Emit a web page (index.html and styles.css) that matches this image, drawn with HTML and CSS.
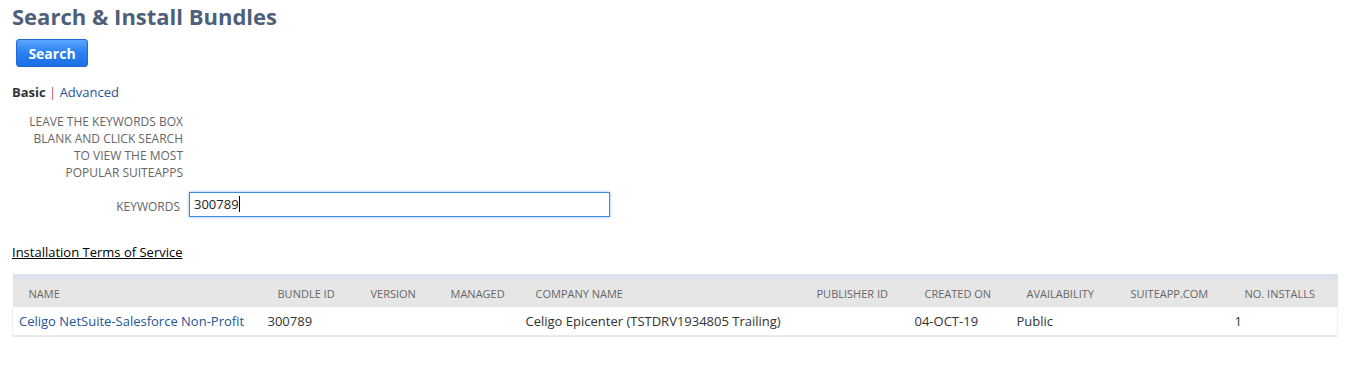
FILE: index.html
```html
<!DOCTYPE html>
<html lang="en">
<head>
  <meta charset="UTF-8" />
  <title>Search &amp; Install Bundles</title>
  <link rel="stylesheet" href="styles.css">
</head>
<body>
  <div class="page">
    <h1 class="page-title">Search &amp; Install Bundles</h1>

    <div class="actions">
      <button class="btn-primary">Search</button>
    </div>

    <div class="mode-tabs">
      <span class="tab-active">Basic</span>
      <span class="tab-sep">|</span>
      <a class="tab-link" href="#">Advanced</a>
    </div>

    <div class="form-row">
      <div class="field-label help-text">
        LEAVE THE KEYWORDS BOX<br/>
        BLANK AND CLICK SEARCH<br/>
        TO VIEW THE MOST<br/>
        POPULAR SUITEAPPS
      </div>
    </div>

    <div class="form-row keywords-row">
      <label class="field-label kw-label">KEYWORDS</label>
      <div class="text-input">300789<span class="caret"></span></div>
    </div>

    <a class="terms-link" href="#">Installation Terms of Service</a>

    <table class="results">
      <colgroup>
        <col style="width: 249px">
        <col style="width: 93px">
        <col style="width: 80px">
        <col style="width: 85px">
        <col style="width: 281px">
        <col style="width: 108px">
        <col style="width: 102px">
        <col style="width: 104px">
        <col style="width: 114px">
        <col style="width: 109px">
      </colgroup>
      <thead>
        <tr>
          <th>Name</th>
          <th>Bundle ID</th>
          <th>Version</th>
          <th>Managed</th>
          <th>Company Name</th>
          <th>Publisher ID</th>
          <th>Created On</th>
          <th>Availability</th>
          <th>SuiteApp.com</th>
          <th>No. Installs</th>
        </tr>
      </thead>
      <tbody>
        <tr>
          <td><a class="row-link" href="#">Celigo NetSuite-Salesforce Non-Profit</a></td>
          <td>300789</td>
          <td></td>
          <td></td>
          <td>Celigo Epicenter (TSTDRV1934805 Trailing)</td>
          <td></td>
          <td>04-OCT-19</td>
          <td>Public</td>
          <td></td>
          <td>1</td>
        </tr>
      </tbody>
    </table>
  </div>
</body>
</html>
```

FILE: styles.css
```css
html, body {
  margin: 0;
  padding: 0;
  background: #fff;
  font-family: "Open Sans", "Liberation Sans", Arial, sans-serif;
  font-size: 13px;
  color: #333;
}

.page {
  padding: 0 13px 0 12px;
}

.page-title {
  margin: 0;
  font-size: 22px;
  line-height: 32px;
  font-weight: 700;
  color: #4d5f7a;
}

.actions {
  margin-top: 7px;
  padding-left: 4px;
}

.btn-primary {
  display: block;
  width: 72px;
  height: 28px;
  padding: 0;
  border: 1px solid #1f6ad4;
  border-radius: 3px;
  background: linear-gradient(to bottom, #5aa6ff, #2a80f0 50%, #1a6fe6);
  color: #fff;
  font-family: inherit;
  font-size: 14px;
  font-weight: 700;
  cursor: pointer;
}

.mode-tabs {
  margin-top: 16px;
  line-height: 18px;
}

.tab-active {
  font-weight: 700;
  color: #333;
}

.tab-sep {
  color: #9b5a5a;
}

.tab-link {
  color: #255599;
  text-decoration: none;
}

.form-row {
  display: flex;
  align-items: center;
}

.field-label {
  width: 171px;
  text-align: right;
  color: #666;
  font-size: 12px;
}

.help-text {
  margin-top: 12px;
  line-height: 17px;
}

.keywords-row {
  margin-top: 11px;
}

.kw-label {
  width: 168px;
  margin-right: 9px;
  padding-top: 4px;
}

.text-input {
  box-sizing: border-box;
  width: 421px;
  height: 25px;
  padding: 0 4px;
  border: 1px solid #3c8ae6;
  box-shadow: 0 0 3px #8cbcf2;
  font-size: 13px;
  line-height: 23px;
  color: #222;
}

.caret {
  display: inline-block;
  width: 1px;
  height: 16px;
  background: #000;
  vertical-align: -3px;
}

.terms-link {
  display: inline-block;
  margin-top: 26px;
  line-height: 18px;
  color: #000;
  text-decoration: underline;
}

.results {
  margin-top: 13px;
  width: 1325px;
  border-collapse: collapse;
  table-layout: fixed;
  border-top: 5px solid #dbe2ed;
}

.results th {
  height: 28px;
  padding: 0 0 0 16px;
  background: #e6e6e6;
  color: #666;
  font-size: 11px;
  font-weight: 400;
  text-transform: uppercase;
  text-align: left;
}

.results td {
  height: 27px;
  padding: 0 0 1px 6px;
  background: #fff;
  color: #333;
  white-space: nowrap;
  border-bottom: 2px solid #ebebeb;
}

.results tbody tr {
  border-left: 1px solid #f0f0f0;
  border-right: 1px solid #f0f0f0;
}

.row-link {
  color: #255599;
  text-decoration: none;
}
```
